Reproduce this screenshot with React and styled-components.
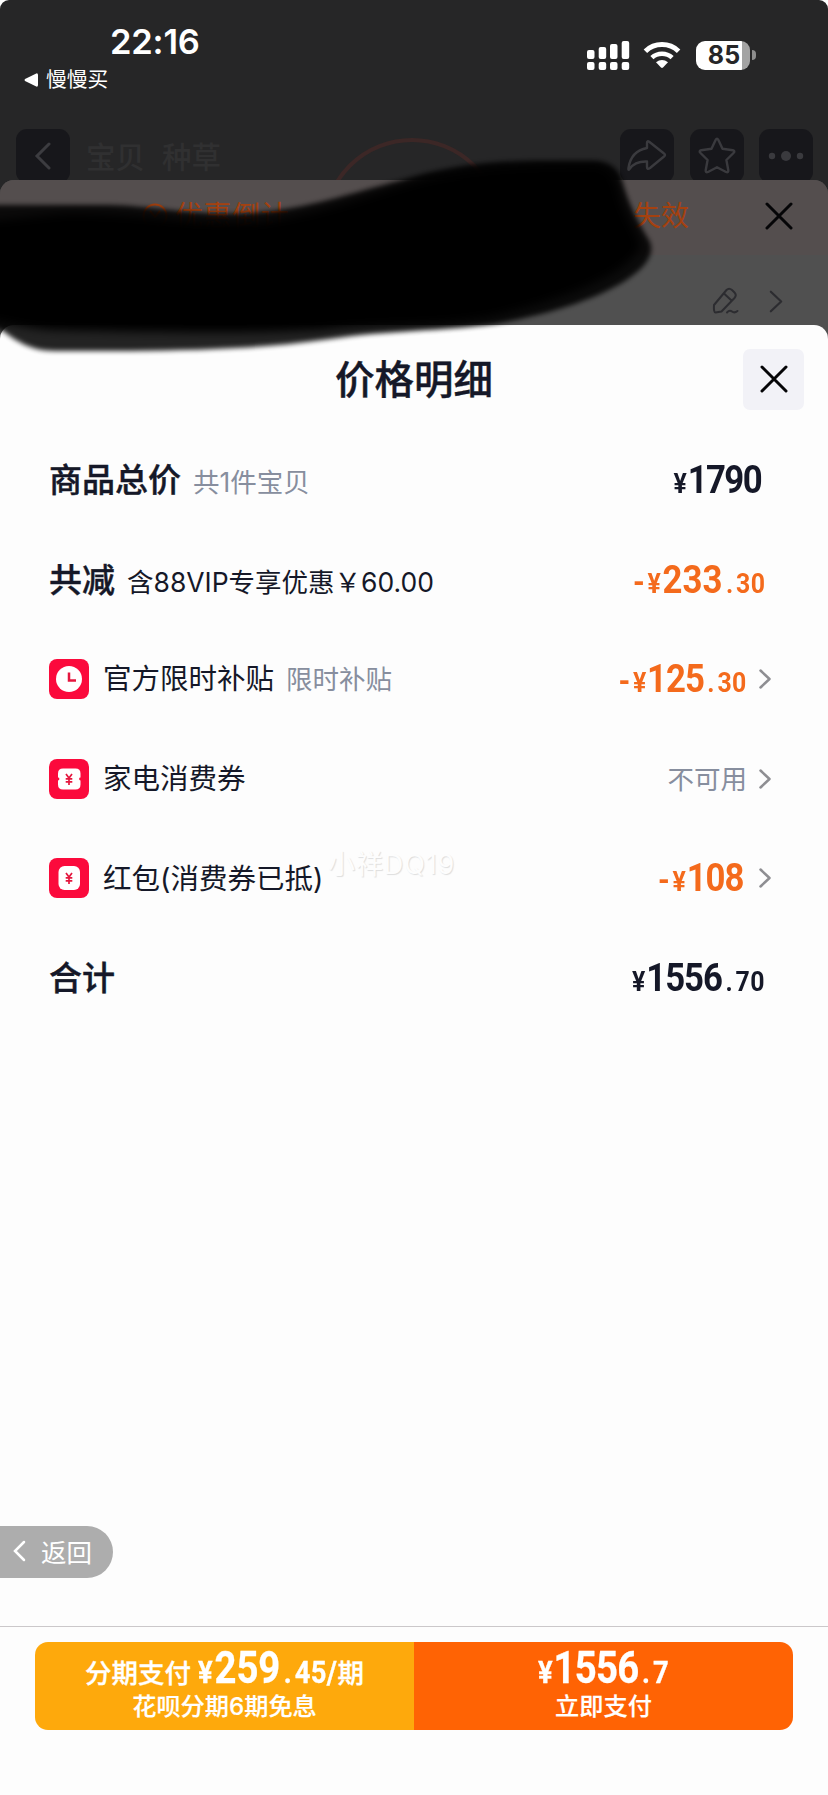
import React from 'react';
import styled, { createGlobalStyle } from 'styled-components';

const Global = createGlobalStyle`
  * { box-sizing: border-box; }
  html, body { margin: 0; padding: 0; background: #fff; }
  body { font-family: Inter, "Noto Sans CJK SC", sans-serif; color: #151828; }
  svg { display: block; flex: none; }
`;

const Screen = styled.div`
  position: relative;
  width: 828px;
  height: 1795px;
  display: flex;
  flex-direction: column;
  overflow: hidden;
  background: #fff;
`;

const Backdrop = styled.div`
  height: 350px;
  flex: none;
  border-radius: 9px 9px 0 0;
  background: #262627;
`;

const StatusBar = styled.header`
  height: 129px;
  display: flex;
  justify-content: space-between;
  padding: 24px 72px 0 24px;
`;

const Clock = styled.div`
  padding-left: 86px;
  font-size: 34.5px;
  line-height: 35px;
  font-weight: 600;
  letter-spacing: -0.2px;
  color: #fff;
`;

const ReturnApp = styled.div`
  display: flex;
  align-items: center;
  gap: 7px;
  margin-top: 7px;
  font-size: 20.7px;
  line-height: 28px;
  color: #fff;
`;

const Signals = styled.div`
  display: flex;
  align-items: center;
  height: 30px;
  margin-top: 16px;
`;

const WifiIcon = styled.svg`
  margin-left: 13px;
`;

const Battery = styled.div`
  width: 54px;
  height: 29px;
  margin-left: 15px;
  padding-left: 2px;
  border-radius: 9px;
  background: linear-gradient(90deg, #fff 46px, #a3a3a3 46px);
  color: #262628;
  font-size: 25px;
  line-height: 29px;
  font-weight: 700;
  text-align: center;
`;

const BatteryTip = styled.div`
  width: 4px;
  height: 10px;
  margin-left: 2px;
  border-radius: 0 4px 4px 0;
  background: #8d8d8d;
`;

const NavBar = styled.nav`
  position: relative;
  height: 51px;
  display: flex;
  align-items: flex-start;
  gap: 15.5px;
  padding: 0 15px 0 15.5px;
  overflow: hidden;
`;

const NavButton = styled.div`
  width: 54px;
  height: 54px;
  flex: none;
  display: flex;
  align-items: center;
  justify-content: center;
  border-radius: 11px;
  background: #17171b;
`;

const NavTabs = styled.div`
  flex: 1;
  display: flex;
  gap: 17px;
  padding-left: 1px;
  font-size: 29.5px;
  line-height: 57px;
  font-weight: 500;
  color: #303031;
`;

const Ring = styled.svg`
  position: absolute;
  left: 320px;
  top: 6px;
`;

const OrderSheet = styled.section`
  height: 170px;
  border-radius: 14px 14px 0 0;
  background: #505050;
  overflow: hidden;
`;

const Banner = styled.div`
  height: 75px;
  display: flex;
  align-items: center;
  padding: 0 35px 3px 142px;
  background: #544e4e;
  color: #a5410f;
  font-size: 28px;
  line-height: 40px;
`;

const BannerStart = styled.span`
  margin-left: 7px;
  letter-spacing: 0.6px;
`;

const BannerEnd = styled.span`
  margin-left: auto;
  margin-right: 76px;
`;

const AddressRow = styled.div`
  height: 70px;
  display: flex;
  align-items: center;
  justify-content: flex-end;
  gap: 30px;
  padding: 22px 45px 0 0;
`;

const Sheet = styled.main`
  position: relative;
  flex: 1;
  display: flex;
  flex-direction: column;
  margin-top: -25px;
  border-radius: 14px 14px 0 0;
  background: #fdfdfd;
`;

const SheetHeader = styled.div`
  display: grid;
  grid-template-columns: 1fr auto 1fr;
  align-items: center;
  height: 105px;
  padding: 3px 24px 0;
`;

const Title = styled.h1`
  grid-column: 2;
  margin: 2px 0 0;
  font-size: 39.5px;
  line-height: 58px;
  font-weight: 500;
  -webkit-text-stroke: 0.4px currentColor;
`;

const CloseButton = styled.div`
  justify-self: end;
  width: 61px;
  height: 61px;
  display: flex;
  align-items: center;
  justify-content: center;
  border-radius: 7px;
  background: #f2f2f7;
`;

const Rows = styled.div`
  padding: 0 57px 0 49px;
`;

const Row = styled.div`
  display: flex;
  align-items: center;
  height: 99.6px;
  padding-right: ${(p) => (p.$plain ? '6px' : '0')};
`;

const Label = styled.div`
  flex: 1;
  display: flex;
  align-items: baseline;
  gap: 12px;
  padding-top: 1px;
  white-space: nowrap;
`;

const Strong = styled.span`
  font-size: 33px;
  line-height: 48px;
  font-weight: 500;
  -webkit-text-stroke: 0.4px currentColor;
`;

const Name = styled.span`
  font-size: 28.5px;
  line-height: 42px;
  font-weight: 400;
`;

const Note = styled.span`
  font-size: 26.5px;
  line-height: 40px;
  color: ${(p) => (p.$dark ? '#151828' : '#878e9e')};
`;

const IconBox = styled.div`
  margin-right: 14px;
`;

const Arrow = styled.div`
  margin-left: 12px;
`;

const Amount = styled.div`
  display: flex;
  align-items: baseline;
  color: ${(p) => p.$color || 'inherit'};
  font-family: Roboto, sans-serif;
  font-weight: 700;
  font-size: ${(p) => p.$size || 39.5}px;
  line-height: 1.2;
  transform: scaleX(0.88);
  transform-origin: ${(p) => p.$origin || 'right'} center;
`;

const Minus = styled.span`
  margin-right: 3px;
  font-size: 0.86em;
`;

const Minor = styled.span`
  font-size: 0.715em;
  font-weight: 700;
  letter-spacing: ${(p) => p.$spacing || 0}px;
`;

const Whole = styled.span`
  margin: 0 4px 0 ${(p) => (p.$tight ? 0 : 1)}px;
  letter-spacing: ${(p) => p.$tight || 0}px;
`;

const Dot = styled.span`
  margin-right: 3px;
`;

const Watermark = styled.div`
  position: absolute;
  left: 328px;
  top: 520px;
  font-size: 27px;
  line-height: 40px;
  letter-spacing: 0.9px;
  color: #fdfdfd;
  text-shadow: 1px 1px 1px #dedede;
`;

const BackPill = styled.div`
  width: 113px;
  height: 52px;
  display: flex;
  align-items: center;
  gap: 15px;
  margin-top: auto;
  padding: 0 0 3px 13px;
  border-radius: 0 26px 26px 0;
  background: #adadad;
  color: #fff;
  font-size: 25.5px;
`;

const Footer = styled.footer`
  display: flex;
  height: 169px;
  margin-top: 48px;
  padding: 15px 35px 0;
  border-top: 1px solid #cbc8ca;
`;

const PayButton = styled.div`
  flex: 1;
  height: 88px;
  display: flex;
  flex-direction: column;
  align-items: center;
  color: #fff;
  background: ${(p) => (p.$primary ? '#ff6304' : '#fea90c')};
  border-radius: ${(p) => (p.$primary ? '0 13px 13px 0' : '13px 0 0 13px')};
`;

const PayLine = styled.div`
  height: 50px;
  display: flex;
  align-items: baseline;
  padding-top: 1px;
  font-size: 26.5px;
  line-height: 50px;
  font-weight: 500;
  white-space: nowrap;
  -webkit-text-stroke: 0.3px currentColor;
`;

const PayNote = styled.div`
  margin-top: -2px;
  font-size: 24.2px;
  line-height: 34px;
  font-weight: 500;
  -webkit-text-stroke: 0.2px currentColor;
`;

const InlineAmount = styled.div`
  margin: 0 -19px 0 7px;
`;

const Scribble = styled.svg`
  position: absolute;
  left: 0;
  top: 0;
  pointer-events: none;
`;

const Cross = () => (
  <svg width="28" height="28" viewBox="0 0 28 28" fill="none" stroke="#050507" strokeWidth="3" strokeLinecap="round">
    <path d="M2 2 26 26M26 2 2 26" />
  </svg>
);

const Chevron = ({ color = '#8e8e92', w = 12, h = 20, sw = 2.5 }) => (
  <svg width={w} height={h} viewBox="0 0 12 20" fill="none" stroke={color} strokeWidth={sw} strokeLinecap="round" strokeLinejoin="round">
    <path d="M1.5 1.5 10.5 10 1.5 18.5" />
  </svg>
);

const Yen = () => <path d="M17 15 20 19 23 15M20 19V26M16.7 19.8H23.3M16.7 22.8H23.3" stroke="#e5173f" strokeWidth="1.7" fill="none" />;

const Tile = ({ kind }) => (
  <svg width="40" height="40" viewBox="0 0 40 40" fill="none">
    <rect width="40" height="40" rx="8" fill="#fb0a3c" />
    {kind === 'clock' && (
      <>
        <circle cx="20" cy="20" r="13" fill="#fff" />
        <path d="M20 13.5V21.5H27" stroke="#e5173f" strokeWidth="2.5" />
      </>
    )}
    {kind === 'coupon' && (
      <>
        <path d="M14 9.5H26.5Q31.5 9.5 31.5 14.5V18.6A1.4 1.4 0 0 0 31.5 21.4V25.5Q31.5 30.5 26.5 30.5H14Q9 30.5 9 25.5V21.4A1.4 1.4 0 0 0 9 18.6V14.5Q9 9.5 14 9.5Z" fill="#fff" />
        <Yen />
      </>
    )}
    {kind === 'packet' && (
      <>
        <rect x="9.5" y="8" width="21.5" height="24" rx="6" fill="#fff" />
        <Yen />
      </>
    )}
  </svg>
);

const Price = ({ minus, whole, cents, tight, ...rest }) => (
  <Amount {...rest}>
    {minus && <Minus>-</Minus>}
    <Minor $spacing={1}>¥</Minor>
    <Whole $tight={tight}>{whole}</Whole>
    {cents && (
      <Minor $spacing={0.4}>
        <Dot>.</Dot>
        {cents}
      </Minor>
    )}
  </Amount>
);

const orange = '#f46a1c';

export default function App() {
  return (
    <Screen>
      <Global />
      <Backdrop>
        <StatusBar>
          <div>
            <Clock>22:16</Clock>
            <ReturnApp>
              <svg width="15" height="14" viewBox="0 0 15 14" fill="#fff">
                <path d="M1 6 12.3.4Q14 0 14 2V12Q14 14 12.3 13.6L1 8Q0 7 1 6Z" />
              </svg>
              慢慢买
            </ReturnApp>
          </div>
          <Signals>
            <svg width="43" height="29" viewBox="0 0 43 29" fill="#fff">
              <rect x="0" y="9" width="7.5" height="9" rx="2" />
              <rect x="11.7" y="6" width="7.5" height="12" rx="2" />
              <rect x="23" y="3" width="7.5" height="15" rx="2" />
              <rect x="34.7" y="0" width="7.5" height="18" rx="2" />
              <rect x="0" y="21" width="7.5" height="8" rx="2" />
              <rect x="11.7" y="21" width="7.5" height="8" rx="2" />
              <rect x="23" y="21" width="7.5" height="8" rx="2" />
              <rect x="34.7" y="21" width="7.5" height="8" rx="2" />
            </svg>
            <WifiIcon width="38" height="28" viewBox="0 0 38 28" fill="none" stroke="#fff" strokeWidth="5">
              <path d="M2.4 10.2A24 24 0 0 1 35.6 10.2" />
              <path d="M8.9 16.6A15 15 0 0 1 29.1 16.6" strokeWidth="4.6" />
              <path d="M13 21.3Q19 16.6 25 21.3L20 26.6Q19 27.5 18 26.6Z" fill="#fff" stroke="none" />
            </WifiIcon>
            <Battery>85</Battery>
            <BatteryTip />
          </Signals>
        </StatusBar>
        <NavBar>
          <Ring width="190" height="50" viewBox="0 0 190 50" fill="none" stroke="#3c2726" strokeWidth="4">
            <circle cx="92" cy="93" r="88" />
          </Ring>
          <NavButton>
            <svg width="18" height="28" viewBox="0 0 18 28" fill="none" stroke="#3c3c40" strokeWidth="3" strokeLinecap="round">
              <path d="M15 2 3 14 15 26" />
            </svg>
          </NavButton>
          <NavTabs>
            <span>宝贝</span>
            <span>种草</span>
          </NavTabs>
          <NavButton>
            <svg width="40" height="34" viewBox="0 0 40 34" fill="none" stroke="#3a3a3e" strokeWidth="2.4" strokeLinejoin="round">
              <path d="M20 9V4Q20 1 22.5 3L37 14.5Q39 16 37 17.5L23 29Q20 31 20 28V22.5Q8 22 2.5 30Q1 32 1.5 29Q4 12 20 9Z" />
            </svg>
          </NavButton>
          <NavButton>
            <svg width="40" height="38" viewBox="0 0 40 38" fill="none" stroke="#3a3a3e" strokeWidth="2.4" strokeLinejoin="round">
              <path d="M18.6 3Q20 .5 21.4 3L25.5 11.8 35.8 13.2Q38.5 14 36.5 16L29.4 23 31.3 33.2Q31.5 36 29 35L20 30.3 11 35Q8.5 36 8.7 33.2L10.6 23 3.5 16Q1.5 14 4.2 13.2L14.5 11.8Z" />
            </svg>
          </NavButton>
          <NavButton>
            <svg width="36" height="12" viewBox="0 0 36 12" fill="#3a3a3e">
              <circle cx="4" cy="6" r="3.2" />
              <circle cx="18" cy="6" r="5" />
              <circle cx="32" cy="6" r="3.2" />
            </svg>
          </NavButton>
        </NavBar>
        <OrderSheet>
          <Banner>
            <svg width="26" height="26" viewBox="0 0 26 26" fill="none" stroke="#a5410f" strokeWidth="2">
              <circle cx="13" cy="13" r="11.5" />
              <path d="M8 8 13 14 18 8" />
            </svg>
            <BannerStart>优惠倒计</BannerStart>
            <BannerEnd>失效</BannerEnd>
            <Cross />
          </Banner>
          <AddressRow>
            <svg width="27" height="28" viewBox="0 0 27 28" fill="none" stroke="#2c2c30" strokeWidth="2" strokeLinejoin="round" strokeLinecap="round">
              <path d="M2 18 14.5 3Q17 .5 20 3L22.5 5.5Q25 8 22.5 11L9.5 24.5 3.5 25.5Q1.5 25.5 2 18ZM12 6.5 19.5 13.5" />
              <path d="M15 25.5Q17.5 22.5 20 24.5T25.5 24" />
            </svg>
            <Chevron color="#2c2c30" w={14} h={23} sw={1.9} />
          </AddressRow>
        </OrderSheet>
      </Backdrop>
      <Sheet>
        <SheetHeader>
          <Title>价格明细</Title>
          <CloseButton>
            <Cross />
          </CloseButton>
        </SheetHeader>
        <Rows>
          <Row $plain>
            <Label>
              <Strong>商品总价</Strong>
              <Note>共1件宝贝</Note>
            </Label>
            <Price whole="1790" tight={-1.8} />
          </Row>
          <Row $plain>
            <Label>
              <Strong>共减</Strong>
              <Note $dark>含88VIP专享优惠￥60.00</Note>
            </Label>
            <Price minus whole="233" cents="30" $color={orange} />
          </Row>
          <Row>
            <IconBox><Tile kind="clock" /></IconBox>
            <Label>
              <Name>官方限时补贴</Name>
              <Note>限时补贴</Note>
            </Label>
            <Price minus whole="125" cents="30" tight={-1.2} $color={orange} />
            <Arrow><Chevron /></Arrow>
          </Row>
          <Row>
            <IconBox><Tile kind="coupon" /></IconBox>
            <Label>
              <Name>家电消费券</Name>
            </Label>
            <Note>不可用</Note>
            <Arrow><Chevron /></Arrow>
          </Row>
          <Row>
            <IconBox><Tile kind="packet" /></IconBox>
            <Label>
              <Name>红包(消费券已抵)</Name>
            </Label>
            <Price minus whole="108" tight={-1.2} $color={orange} />
            <Arrow><Chevron /></Arrow>
          </Row>
          <Row $plain>
            <Label>
              <Strong>合计</Strong>
            </Label>
            <Price whole="1556" cents="70" tight={-1.2} />
          </Row>
        </Rows>
        <Watermark>小祥DQ19</Watermark>
        <BackPill>
          <svg width="13" height="22" viewBox="0 0 13 22" fill="none" stroke="#fff" strokeWidth="2.5" strokeLinecap="round">
            <path d="M11 2 2 11 11 20" />
          </svg>
          返回
        </BackPill>
        <Footer>
          <PayButton>
            <PayLine>
              分期支付
              <InlineAmount>
                <Price whole="259" cents="45/" $size={43.5} $origin="left" />
              </InlineAmount>
              期
            </PayLine>
            <PayNote>花呗分期6期免息</PayNote>
          </PayButton>
          <PayButton $primary>
            <PayLine>
              <Price whole="1556" cents="7" tight={-0.8} $size={43.5} $origin="center" />
            </PayLine>
            <PayNote>立即支付</PayNote>
          </PayButton>
        </Footer>
      </Sheet>
      <Scribble width="828" height="380" viewBox="0 0 828 380">
        <defs>
          <filter id="soft" x="-5%" y="-10%" width="110%" height="120%">
            <feGaussianBlur stdDeviation="2.5" />
          </filter>
          <filter id="softer" x="-5%" y="-10%" width="110%" height="120%">
            <feGaussianBlur stdDeviation="5" />
          </filter>
        </defs>
        <path
          filter="url(#soft)"
          opacity="0.86"
          d="M-20 205H110C155 206 190 216 250 213C310 209 350 193 400 181C440 168 480 162 530 161H590Q614 160 621 178C629 205 637 221 649 240C657 255 643 269 625 281C590 302 545 315 495 324C440 331 390 330 330 339C260 349 200 350 130 351H55C30 351 15 340 3 331L-20 320Z"
        />
        <path
          filter="url(#softer)"
          d="M-20 222L60 214C130 211 190 226 260 222C330 212 370 194 415 182C460 170 520 165 595 166Q612 168 618 188C622 215 640 235 640 247C630 270 580 296 490 317C430 328 380 322 320 330C230 334 150 332 60 330C30 330 10 322 -20 318Z"
        />
      </Scribble>
    </Screen>
  );
}
